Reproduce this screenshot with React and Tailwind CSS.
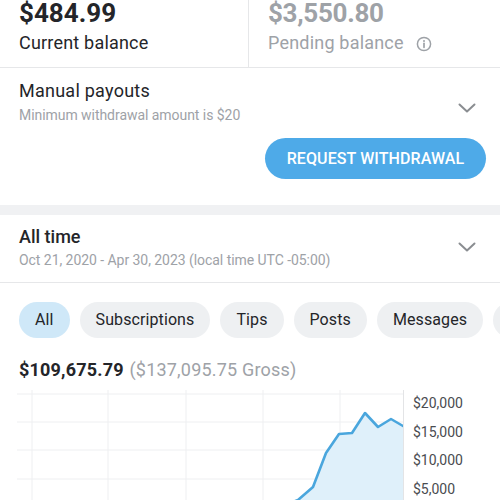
import React from "react";

const Chevron = () => (
  <svg width="18" height="10" viewBox="0 0 18 10" fill="none">
    <path d="M1.5 1.5 L9 8.5 L16.5 1.5" stroke="#8a8d91" strokeWidth="2" strokeLinecap="round" strokeLinejoin="round" />
  </svg>
);

const InfoIcon = () => (
  <svg width="16" height="16" viewBox="0 0 16 16" fill="none">
    <circle cx="8" cy="8" r="6.6" stroke="#9ea2a7" strokeWidth="1.5" />
    <circle cx="8" cy="5.1" r="1" fill="#9ea2a7" />
    <path d="M8 7.3 V11.3" stroke="#9ea2a7" strokeWidth="1.7" strokeLinecap="round" />
  </svg>
);

const pts = [
  [17, 118], [60, 118], [120, 118], [180, 118], [240, 118], [272, 117], [285, 115],
  [298, 110], [313, 97], [326, 63], [339, 44], [352, 43], [365, 23], [378, 37], [391, 29], [403, 36],
];

const Chart = () => {
  const line = pts.map((p, i) => `${i ? "L" : "M"}${p[0]} ${p[1]}`).join(" ");
  const area = `${line} L403 130 L17 130 Z`;
  const hLines = [4, 32, 60, 89];
  const vLines = [32, 108, 186, 263, 340];
  return (
    <svg width="404" height="110" viewBox="0 0 404 110" className="block shrink-0">
      {hLines.map((y) => (
        <line key={y} x1="17" x2="403" y1={y} y2={y} stroke="#eeeff1" strokeWidth="1" />
      ))}
      {vLines.map((x) => (
        <line key={x} x1={x} x2={x} y1="0" y2="110" stroke="#eeeff1" strokeWidth="1" />
      ))}
      <path d={area} fill="#dff0fa" />
      <path d={line} fill="none" stroke="#4aa6dd" strokeWidth="2.6" strokeLinejoin="round" strokeLinecap="round" />
      <line x1="403.5" x2="403.5" y1="0" y2="110" stroke="#e3e4e6" strokeWidth="1" />
    </svg>
  );
};

export default function App() {
  const pills = ["All", "Subscriptions", "Tips", "Posts", "Messages", "Referrals"];
  return (
    <div className="w-[500px] h-[500px] overflow-hidden bg-white text-[#242529]" style={{ fontFamily: "Roboto, 'Noto Sans', sans-serif" }}>
      {/* balances */}
      <div className="flex h-[68px] border-b border-[#e6e7e9]">
        <div className="w-[249px] border-r border-[#e6e7e9] pl-[19px]">
          <div className="-mt-[2px] text-[26px] leading-[30px] font-bold">$484.99</div>
          <div className="mt-[3px] text-[18px] leading-[24px] tracking-[0.2px]">Current balance</div>
        </div>
        <div className="flex-1 pl-[19px]">
          <div className="-mt-[2px] text-[26px] leading-[30px] font-bold text-[#9ea2a7] tracking-[-0.3px]">$3,550.80</div>
          <div className="mt-[3px] flex items-center text-[18px] leading-[24px] text-[#9ea2a7] tracking-[0.2px]">
            <span>Pending balance</span>
            <span className="ml-[12px] mt-[2px]"><InfoIcon /></span>
          </div>
        </div>
      </div>

      {/* manual payouts */}
      <div className="px-[19px] pt-[11px] pb-[26px]">
        <div className="flex items-center justify-between">
          <div>
            <div className="text-[18px] leading-[24px] tracking-[0.25px]">Manual payouts</div>
            <div className="mt-[2px] text-[14px] leading-[20px] text-[#9ea2a7] tracking-[-0.05px]">Minimum withdrawal amount is $20</div>
          </div>
          <div className="mr-[5px] mt-[12px]"><Chevron /></div>
        </div>
        <div className="mt-[13px] flex justify-end">
          <button className="-mr-[5px] h-[41px] w-[221px] rounded-full bg-[#4eaae8] text-[16px] font-medium text-white tracking-[0.1px]">
            REQUEST WITHDRAWAL
          </button>
        </div>
      </div>

      <div className="h-[10px] bg-[#f0f1f3]" />

      {/* all time */}
      <div className="flex items-center justify-between border-b border-[#e6e7e9] px-[19px] pt-[10px] pb-[12px]">
        <div>
          <div className="text-[18px] leading-[24px] font-medium">All time</div>
          <div className="mt-[1px] text-[14px] leading-[20px] text-[#9ea2a7] tracking-[-0.05px]">Oct 21, 2020 - Apr 30, 2023 (local time UTC -05:00)</div>
        </div>
        <div className="mr-[5px] -mt-[2px]"><Chevron /></div>
      </div>

      {/* pills */}
      <div className="mt-[19px] flex gap-[10px] pl-[19px] whitespace-nowrap">
        {pills.map((p, i) => (
          <div
            key={p}
            className={`h-[36px] shrink-0 rounded-full flex items-center text-[16px] tracking-[0.1px] px-[16px] ${i === 0 ? "bg-[#cfe8f8]" : "bg-[#eef0f2]"}`}
          >
            {p}
          </div>
        ))}
      </div>

      {/* total */}
      <div className="mt-[20px] px-[19px] text-[18px] leading-[24px] tracking-[0.2px]">
        <span className="font-bold">$109,675.79</span>{" "}
        <span className="ml-[1px] text-[#9ea2a7]">($137,095.75 Gross)</span>
      </div>

      {/* chart */}
      <div className="mt-[8px] flex">
        <Chart />
        <div className="-mt-[1px] pl-[9px] text-[14px] leading-[28.5px] text-[#4a4c50]">
          <div>$20,000</div>
          <div>$15,000</div>
          <div>$10,000</div>
          <div>$5,000</div>
        </div>
      </div>
    </div>
  );
}
